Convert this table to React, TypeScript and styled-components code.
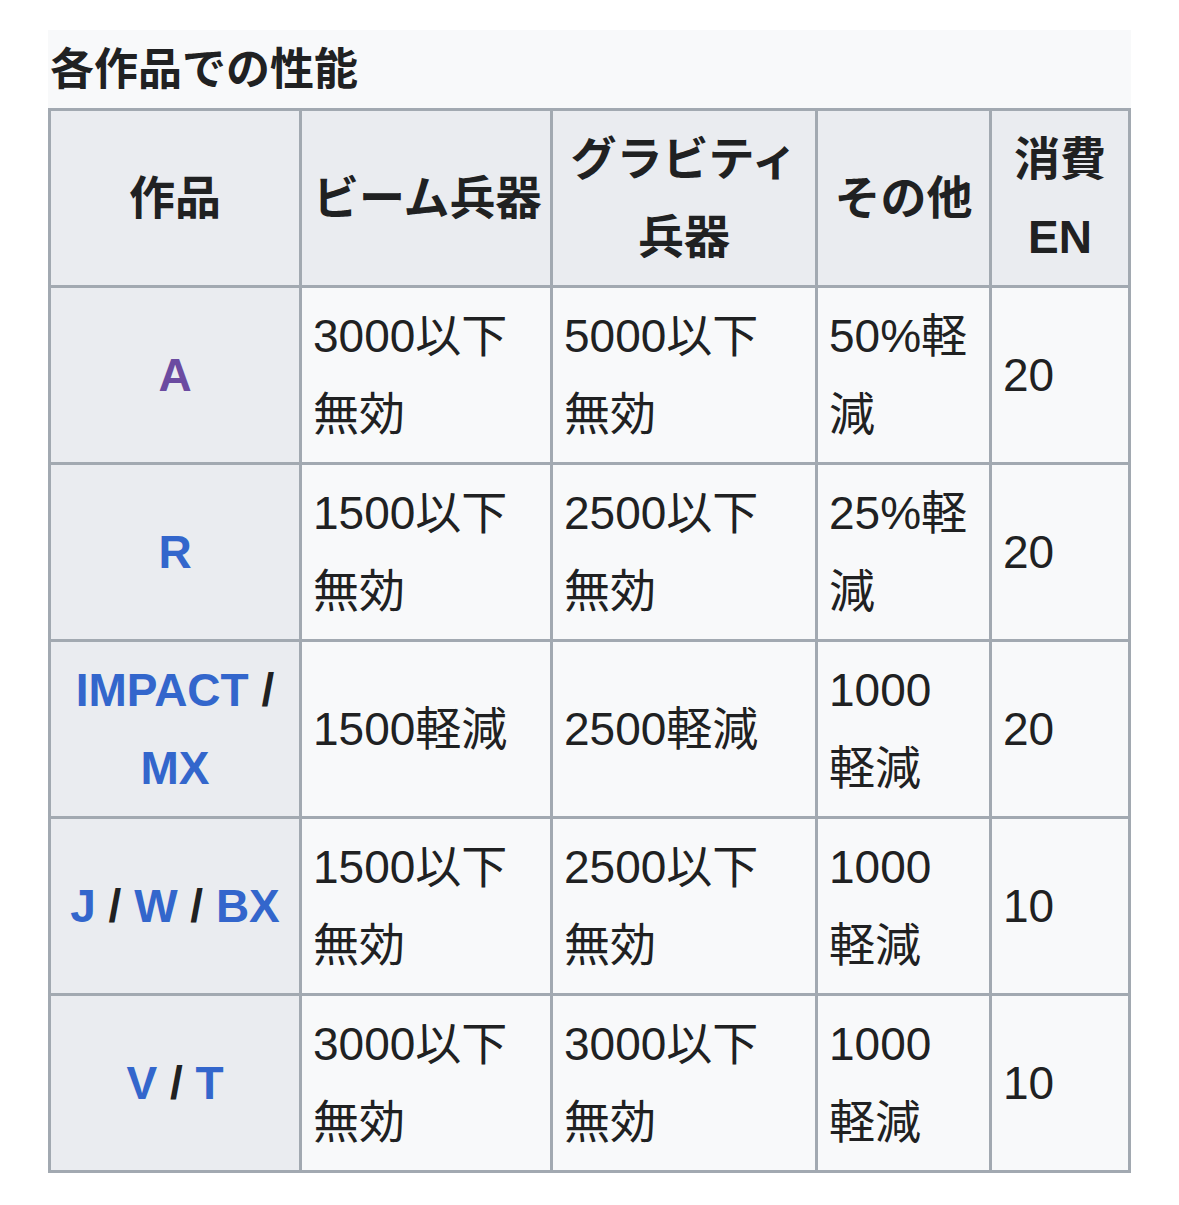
import React from "react";
import styled, { createGlobalStyle } from "styled-components";

const Global = createGlobalStyle`
  html, body { margin: 0; padding: 0; background: #ffffff; }
  body {
    font-family: "Liberation Sans", "Noto Sans CJK JP", sans-serif;
    color: #202122;
  }
`;

const Page = styled.div`
  padding: 30px 0 0 48px;
`;

const Table = styled.table`
  border-collapse: collapse;
  table-layout: fixed;
  width: 1083px;
  font-size: 46px;
  line-height: 78px;
  background: #f8f9fa;
  color: #202122;
  border: 3px solid #a2a9b1;
`;

const Caption = styled.caption`
  text-align: left;
  font-weight: bold;
  font-size: 44px;
  background: #f8f9fa;
  padding: 0 2px;
  height: 78px;
  line-height: 80px;
`;

const Th = styled.th`
  background: #eaecf0;
  border: 3px solid #a2a9b1;
  padding: 9px 11px;
  font-weight: bold;
  text-align: center;
  vertical-align: middle;
  white-space: nowrap;
`;

const Td = styled.td`
  border: 3px solid #a2a9b1;
  padding: 9px 11px;
  text-align: left;
  vertical-align: middle;
  white-space: nowrap;
`;

const Link = styled.span<{ $visited?: boolean }>`
  color: ${(p) => (p.$visited ? "#6b4ba1" : "#3366cc")};
`;

const Sep = styled.span`
  color: #202122;
`;

type Title = { text: string; visited?: boolean }[];

const rows: { title: Title[]; cells: string[][]; en: string }[] = [
  {
    title: [[{ text: "A", visited: true }]],
    cells: [["3000以下", "無効"], ["5000以下", "無効"], ["50%軽", "減"]],
    en: "20",
  },
  {
    title: [[{ text: "R" }]],
    cells: [["1500以下", "無効"], ["2500以下", "無効"], ["25%軽", "減"]],
    en: "20",
  },
  {
    title: [[{ text: "IMPACT" }], [{ text: "MX" }]],
    cells: [["1500軽減"], ["2500軽減"], ["1000", "軽減"]],
    en: "20",
  },
  {
    title: [[{ text: "J" }, { text: "W" }, { text: "BX" }]],
    cells: [["1500以下", "無効"], ["2500以下", "無効"], ["1000", "軽減"]],
    en: "10",
  },
  {
    title: [[{ text: "V" }, { text: "T" }]],
    cells: [["3000以下", "無効"], ["3000以下", "無効"], ["1000", "軽減"]],
    en: "10",
  },
];

const Lines: React.FC<{ lines: string[] }> = ({ lines }) => (
  <>
    {lines.map((l, i) => (
      <React.Fragment key={i}>
        {i > 0 && <br />}
        {l}
      </React.Fragment>
    ))}
  </>
);

const TitleCell: React.FC<{ title: Title[] }> = ({ title }) => {
  const multiLine = title.length > 1;
  return (
    <Th>
      {title.map((line, li) => (
        <React.Fragment key={li}>
          {li > 0 && <br />}
          {line.map((t, ti) => (
            <React.Fragment key={ti}>
              {ti > 0 && <Sep> / </Sep>}
              <Link $visited={t.visited}>{t.text}</Link>
            </React.Fragment>
          ))}
          {multiLine && li < title.length - 1 && <Sep> /</Sep>}
        </React.Fragment>
      ))}
    </Th>
  );
};

export default function App() {
  return (
    <>
      <Global />
      <Page>
        <Table>
          <Caption>各作品での性能</Caption>
          <colgroup>
            <col style={{ width: 251 }} />
            <col style={{ width: 251 }} />
            <col style={{ width: 265 }} />
            <col style={{ width: 174 }} />
            <col style={{ width: 139 }} />
          </colgroup>
          <thead>
            <tr>
              <Th>作品</Th>
              <Th>ビーム兵器</Th>
              <Th>
                <Lines lines={["グラビティ", "兵器"]} />
              </Th>
              <Th>その他</Th>
              <Th>
                <Lines lines={["消費", "EN"]} />
              </Th>
            </tr>
          </thead>
          <tbody>
            {rows.map((r, i) => (
              <tr key={i}>
                <TitleCell title={r.title} />
                {r.cells.map((c, j) => (
                  <Td key={j}>
                    <Lines lines={c} />
                  </Td>
                ))}
                <Td>{r.en}</Td>
              </tr>
            ))}
          </tbody>
        </Table>
      </Page>
    </>
  );
}
